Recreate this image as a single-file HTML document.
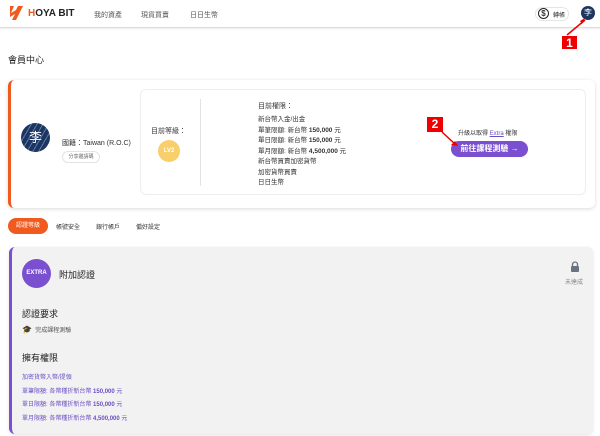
<!DOCTYPE html>
<html><head><meta charset="utf-8"><style>
*{margin:0;padding:0;box-sizing:border-box}
body{width:600px;height:436px;background:#fff;font-family:"Liberation Sans","Noto Sans CJK TC",sans-serif;color:#333;position:relative;overflow:hidden}
.a{position:absolute}
.t{font-size:7px;white-space:nowrap}
</style></head><body>
<div class="a" style="left:0;top:0;width:600px;height:28px;background:#fff;border-bottom:1px solid #ddd;box-shadow:0 1px 2px rgba(0,0,0,.08)"></div>
<svg class="a" style="left:7px;top:5px" width="18" height="16" viewBox="0 0 18 16"><path d="M3 1 L7 1 L4 8 L9 5 L11 1 L16 1 L9 15 L5 15 L8 9 L3 12 Z" fill="#f05a1e"/></svg>
<div class="a" style="left:28px;top:8px;font-size:10px;font-weight:bold;color:#222"><span style="color:#f05a1e">H</span>OYA BIT</div>
<div class="a t" style="left:94px;top:10px;color:#555">我的資產</div>
<div class="a t" style="left:141px;top:10px;color:#555">現貨買賣</div>
<div class="a t" style="left:190px;top:10px;color:#555">日日生幣</div>
<div class="a" style="left:535px;top:7px;width:34px;height:14px;border:1px solid #e5e5e5;border-radius:7px"></div>
<div class="a" style="left:538px;top:8px;width:11px;height:11px;border:1.3px solid #222;border-radius:50%;font-size:8px;line-height:9px;text-align:center;font-weight:bold">$</div>
<div class="a t" style="left:553px;top:10px;font-size:6px">轉帳</div>
<div class="a" style="left:581px;top:6px;width:14px;height:14px;border-radius:50%;background:#1d3560;color:#fff;font-size:8px;text-align:center;line-height:14px">李</div>
<div class="a" style="left:561px;top:35px;width:17px;height:15px;background:#e00;color:#fff;font-weight:bold;font-size:12px;text-align:center;line-height:15px;border:1px solid #fff">1</div>
<svg class="a" style="left:560px;top:15px" width="30" height="25"><path d="M7 20 L25 5" stroke="#e00" stroke-width="1.5"/><path d="M25 3 L22 9 L20 6 Z" fill="#e00"/></svg>
<div class="a" style="left:8px;top:53px;font-size:9px;color:#222">會員中心</div>
<div class="a" style="left:8px;top:80px;width:587px;height:128px;background:#fff;border-radius:6px;border-left:3px solid #f05a1e;box-shadow:0 1px 4px rgba(0,0,0,.15)"></div>
<div class="a" style="left:21px;top:123px;width:29px;height:29px;border-radius:50%;background:repeating-linear-gradient(120deg,#1d3560 0 4px,#5a7aa8 4px 5px);color:#fff;font-size:13px;text-align:center;line-height:29px">李</div>
<div class="a t" style="left:62px;top:138px;font-size:7px">國籍：Taiwan (R.O.C)</div>
<div class="a" style="left:62px;top:151px;width:38px;height:12px;border:1px solid #e3e3e3;border-radius:6px;font-size:5px;text-align:center;line-height:10px;color:#666">分享邀請碼</div>
<div class="a" style="left:140px;top:89px;width:446px;height:106px;border:1px solid #eee;border-radius:6px"></div>
<div class="a t" style="left:151px;top:126px">目前等級：</div>
<div class="a" style="left:158px;top:140px;width:22px;height:22px;border-radius:50%;background:#f8cf6a;color:#fff;font-size:6px;font-weight:bold;text-align:center;line-height:22px">LV2</div>
<div class="a" style="left:200px;top:99px;width:1px;height:87px;background:#e3e3e3"></div>
<div class="a t" style="left:258px;top:101px;line-height:11px">目前權限：</div>
<div class="a t" style="left:258px;top:115px;line-height:10.5px;font-size:6.5px">新台幣入金/出金<br>單筆限額: 新台幣 <b>150,000</b> 元<br>單日限額: 新台幣 <b>150,000</b> 元<br>單月限額: 新台幣 <b>4,500,000</b> 元<br>新台幣買賣加密貨幣<br>加密貨幣買賣<br>日日生幣</div>
<div class="a t" style="left:458px;top:128px;font-size:6px">升級以取得 <u style="color:#6a4fc4">Extra</u> 權限</div>
<div class="a" style="left:451px;top:141px;width:77px;height:16px;border-radius:8px;background:#7a4fd0;color:#fff;font-size:8px;font-weight:bold;text-align:center;line-height:16px">前往課程測驗 →</div>
<div class="a" style="left:427px;top:117px;width:16px;height:15px;background:#e00;color:#fff;font-weight:bold;font-size:12px;text-align:center;line-height:15px">2</div>
<svg class="a" style="left:440px;top:130px" width="20" height="20"><path d="M2 2 L15 14" stroke="#e00" stroke-width="1.5"/><path d="M18 16 L11 15 L15 11 Z" fill="#e00"/></svg>
<div class="a" style="left:8px;top:218px;width:40px;height:16px;border-radius:8px;background:#f05a1e;color:#fff;font-size:6px;text-align:center;line-height:16px">認證等級</div>
<div class="a t" style="left:56px;top:222px;font-size:6px">帳號安全</div>
<div class="a t" style="left:96px;top:222px;font-size:6px">銀行帳戶</div>
<div class="a t" style="left:136px;top:222px;font-size:6px">偏好設定</div>
<div class="a" style="left:9px;top:247px;width:584px;height:187px;background:#f2f2f2;border-radius:6px;border-left:3px solid #7a4fd0;box-shadow:0 1px 3px rgba(0,0,0,.12)"></div>
<div class="a" style="left:22px;top:259px;width:29px;height:29px;border-radius:50%;background:#7a4fd0;color:#fff;font-size:6px;font-weight:bold;text-align:center;line-height:29px">EXTRA</div>
<div class="a t" style="left:59px;top:268px;font-size:9px;color:#222">附加認證</div>
<div class="a t" style="left:22px;top:307px;font-size:9px;color:#222">認證要求</div>
<div class="a t" style="left:22px;top:325px;font-size:6px;color:#555"><span style="font-size:8px;color:#111">🎓</span>&nbsp; 完成課程測驗</div>
<div class="a t" style="left:22px;top:351px;font-size:9px;color:#222">擁有權限</div>
<div class="a t" style="left:22px;top:372px;font-size:6px;color:#6a4fc4;line-height:13.5px">加密貨幣入幣/提領<br>單筆限額: 各幣種折新台幣 <b>150,000</b> 元<br>單日限額: 各幣種折新台幣 <b>150,000</b> 元<br>單月限額: 各幣種折新台幣 <b>4,500,000</b> 元</div>
<svg class="a" style="left:570px;top:261px" width="10" height="11"><path d="M2.5 5 V3.5 a2.5 2.5 0 0 1 5 0 V5" stroke="#6b7280" stroke-width="1.3" fill="none"/><rect x="1" y="5" width="8" height="6" rx="1" fill="#6b7280"/></svg>
<div class="a t" style="left:565px;top:277px;font-size:6px;color:#888">未達成</div>
</body></html>
